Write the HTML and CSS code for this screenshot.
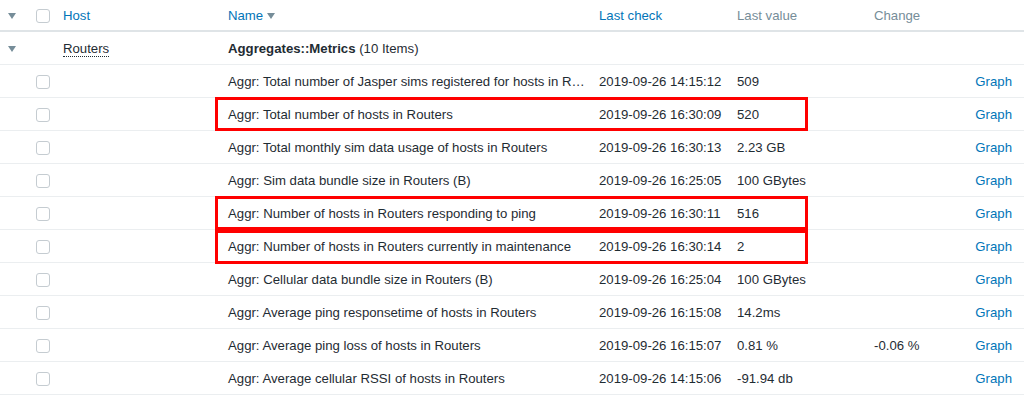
FILE: index.html
```html
<!DOCTYPE html>
<html lang="en">
<head>
    <meta charset="UTF-8">
    <title>Latest data</title>
    <link rel="stylesheet" href="styles.css">
</head>
<body>
    <div class="list-wrap">
        <table class="list-table">
            <colgroup>
                <col class="c-toggle">
                <col class="c-check">
                <col class="c-host">
                <col class="c-name">
                <col class="c-clock">
                <col class="c-value">
                <col class="c-change">
                <col class="c-graph">
            </colgroup>
            <thead>
                <tr>
                    <th><span class="arrow"></span></th>
                    <th><span class="checkbox"></span></th>
                    <th><a class="link">Host</a></th>
                    <th><a class="link">Name</a><span class="sort"></span></th>
                    <th><a class="link">Last check</a></th>
                    <th>Last value</th>
                    <th>Change</th>
                    <th></th>
                </tr>
            </thead>
            <tbody>
                <tr>
                    <td><span class="arrow"></span></td>
                    <td></td>
                    <td><span class="hint">Routers</span></td>
                    <td colspan="5"><b>Aggregates::Metrics</b> (10 Items)</td>
                </tr>
                <tr>
                    <td></td><td><span class="checkbox"></span></td><td></td>
                    <td class="name">Aggr: Total number of Jasper sims registered for hosts in Routers</td>
                    <td>2019-09-26 14:15:12</td><td>509</td><td></td><td class="graph"><a class="link">Graph</a></td>
                </tr>
                <tr>
                    <td></td><td><span class="checkbox"></span></td><td></td>
                    <td class="name">Aggr: Total number of hosts in Routers</td>
                    <td>2019-09-26 16:30:09</td><td>520</td><td></td><td class="graph"><a class="link">Graph</a></td>
                </tr>
                <tr>
                    <td></td><td><span class="checkbox"></span></td><td></td>
                    <td class="name">Aggr: Total monthly sim data usage of hosts in Routers</td>
                    <td>2019-09-26 16:30:13</td><td>2.23 GB</td><td></td><td class="graph"><a class="link">Graph</a></td>
                </tr>
                <tr>
                    <td></td><td><span class="checkbox"></span></td><td></td>
                    <td class="name">Aggr: Sim data bundle size in Routers (B)</td>
                    <td>2019-09-26 16:25:05</td><td>100 GBytes</td><td></td><td class="graph"><a class="link">Graph</a></td>
                </tr>
                <tr>
                    <td></td><td><span class="checkbox"></span></td><td></td>
                    <td class="name">Aggr: Number of hosts in Routers responding to ping</td>
                    <td>2019-09-26 16:30:11</td><td>516</td><td></td><td class="graph"><a class="link">Graph</a></td>
                </tr>
                <tr>
                    <td></td><td><span class="checkbox"></span></td><td></td>
                    <td class="name">Aggr: Number of hosts in Routers currently in maintenance</td>
                    <td>2019-09-26 16:30:14</td><td>2</td><td></td><td class="graph"><a class="link">Graph</a></td>
                </tr>
                <tr>
                    <td></td><td><span class="checkbox"></span></td><td></td>
                    <td class="name">Aggr: Cellular data bundle size in Routers (B)</td>
                    <td>2019-09-26 16:25:04</td><td>100 GBytes</td><td></td><td class="graph"><a class="link">Graph</a></td>
                </tr>
                <tr>
                    <td></td><td><span class="checkbox"></span></td><td></td>
                    <td class="name">Aggr: Average ping responsetime of hosts in Routers</td>
                    <td>2019-09-26 16:15:08</td><td>14.2ms</td><td></td><td class="graph"><a class="link">Graph</a></td>
                </tr>
                <tr>
                    <td></td><td><span class="checkbox"></span></td><td></td>
                    <td class="name">Aggr: Average ping loss of hosts in Routers</td>
                    <td>2019-09-26 16:15:07</td><td>0.81 %</td><td>-0.06 %</td><td class="graph"><a class="link">Graph</a></td>
                </tr>
                <tr>
                    <td></td><td><span class="checkbox"></span></td><td></td>
                    <td class="name">Aggr: Average cellular RSSI of hosts in Routers</td>
                    <td>2019-09-26 14:15:06</td><td>-91.94 db</td><td></td><td class="graph"><a class="link">Graph</a></td>
                </tr>
            </tbody>
        </table>
        <!-- highlight frames drawn over the rows -->
        <div class="mark mark-1"></div>
        <div class="mark mark-2"></div>
        <div class="mark mark-3"></div>
    </div>
</body>
</html>
```

FILE: styles.css
```css
body { margin: 0; background: #ffffff; font-family: "Liberation Sans", Arial, Helvetica, sans-serif; font-size: 13.2px; color: #1f2c33; }
.list-wrap { position: relative; width: 1024px; }
.list-table { width: 1024px; border-collapse: collapse; table-layout: fixed; }
.c-toggle { width: 28px; }
.c-check { width: 32px; }
.c-host { width: 165px; }
.c-name { width: 371px; }
.c-clock { width: 138px; }
.c-value { width: 137px; }
.c-change { width: 89px; }
.c-graph { width: 64px; }
.list-table th { height: 30px; padding: 0 0 0 3px; text-align: left; font-weight: normal; color: #768d99; border-bottom: 2px solid #dfe4e7; white-space: nowrap; }
.list-table td { height: 32px; padding: 0 0 0 3px; border-bottom: 1px solid #ebeef0; white-space: nowrap; overflow: hidden; }
.list-table th:first-child, .list-table td:first-child { padding-left: 8px; }
.list-table th:nth-child(2), .list-table td:nth-child(2) { padding-left: 8px; }
.list-table td.name { text-overflow: ellipsis; padding-right: 8px; }
.list-table td.graph { text-align: right; padding-right: 12px; }
.link { color: #0275b8; text-decoration: none; }
.arrow { display: inline-block; width: 0; height: 0; border-left: 4px solid transparent; border-right: 4px solid transparent; border-top: 6px solid #768d99; vertical-align: middle; }
.sort { display: inline-block; width: 0; height: 0; border-left: 4px solid transparent; border-right: 4px solid transparent; border-top: 6px solid #768d99; vertical-align: middle; margin-left: 4px; }
.checkbox { display: inline-block; width: 12px; height: 12px; border: 1px solid #c5ccd1; border-radius: 3px; background: #ffffff; vertical-align: middle; }
.hint { border-bottom: 1px dotted #1f2c33; }
.mark { position: absolute; left: 215px; width: 593px; height: 34px; box-sizing: border-box; border: 3px solid #ff0000; }
.mark-1 { top: 97px; }
.mark-2 { top: 196px; }
.mark-3 { top: 230px; }
```
